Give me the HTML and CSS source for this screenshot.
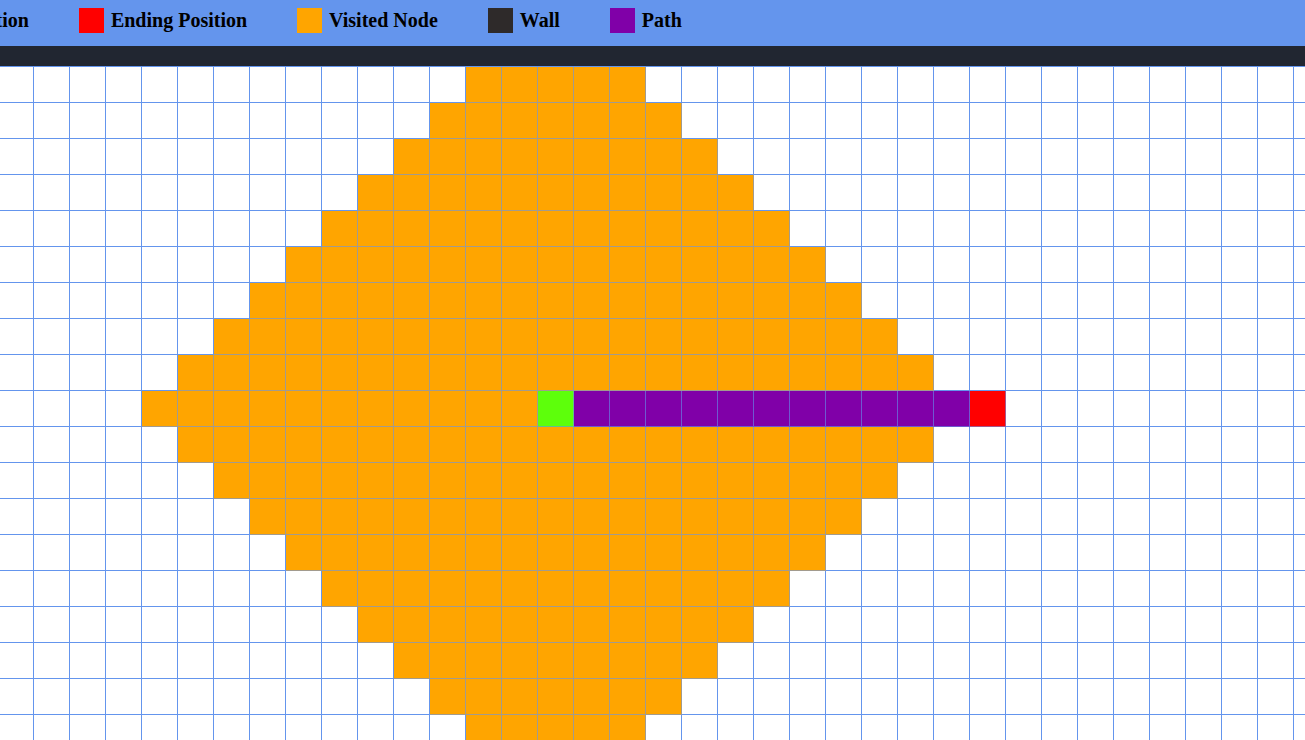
FILE: index.html
```html
<!DOCTYPE html>
<html lang="en">
<head>
<meta charset="utf-8">
<title>Pathfinding Visualizer</title>
<link rel="stylesheet" href="styles.css">
</head>
<body>
<header class="legend-bar">
  <ul class="legend">
    <li class="legend-item"><span class="swatch swatch-start"></span>Starting Position</li>
    <li class="legend-item"><span class="swatch swatch-end"></span>Ending Position</li>
    <li class="legend-item"><span class="swatch swatch-visited"></span>Visited Node</li>
    <li class="legend-item"><span class="swatch swatch-wall"></span>Wall</li>
    <li class="legend-item"><span class="swatch swatch-path"></span>Path</li>
  </ul>
</header>
<div class="toolbar"></div>
<main class="board">
  <div class="grid" id="grid"></div>
</main>
<script src="script.js"></script>
</body>
</html>
```

FILE: styles.css
```css
html, body {
  margin: 0;
  padding: 0;
  background: #ffffff;
  overflow: hidden;
}

body {
  width: 1305px;
  height: 740px;
  font-family: "Liberation Serif", "Times New Roman", serif;
}

.legend-bar {
  height: 46px;
  background: #6495ed;
  box-sizing: border-box;
  padding-top: 8px;
  overflow: hidden;
}

.legend {
  list-style: none;
  margin: 0 0 0 -147px;
  padding: 0;
  display: flex;
  align-items: center;
  gap: 50px;
  white-space: nowrap;
  height: 25px;
}

.legend-item {
  display: flex;
  align-items: center;
  gap: 7px;
  font-size: 20px;
  font-weight: bold;
  color: #000;
  line-height: 25px;
}

.swatch {
  width: 25px;
  height: 25px;
  flex: none;
  display: block;
}

.swatch-start { background: #5dff0b; }
.swatch-end { background: #ff0000; }
.swatch-visited { background: #ffa500; }
.swatch-wall { background: #2e2a2a; }
.swatch-path { background: #8000a8; }

.toolbar {
  height: 20px;
  background: #212631;
}

.board {
  overflow: hidden;
}

.grid {
  display: grid;
  grid-template-columns: repeat(37, 36px);
  grid-auto-rows: 36px;
  width: max-content;
  margin-left: -3px;
  border-top: 1px solid #6495ed;
  border-left: 1px solid #6495ed;
}

.cell {
  box-sizing: border-box;
  width: 36px;
  height: 36px;
  background: #ffffff;
  border-right: 1px solid #6495ed;
  border-bottom: 1px solid #6495ed;
}

.cell-visited {
  background: #ffa500;
  border-color: rgba(100, 149, 237, 0.6);
}

.cell-start {
  background: #5dff0b;
  border-color: rgba(100, 149, 237, 0.6);
}

.cell-end {
  background: #ff0000;
  border-color: rgba(100, 149, 237, 0.6);
}

.cell-path {
  background: #8000a8;
  border-color: rgba(100, 149, 237, 0.6);
}

.cell-wall {
  background: #2e2a2a;
}
```

FILE: script.js
```js
(function () {
  var grid = document.getElementById('grid');
  var COLS = 37, ROWS = 19;
  var START = { r: 9, c: 15 };
  var END = { r: 9, c: 27 };
  var RADIUS = 11;
  var frag = document.createDocumentFragment();
  for (var r = 0; r < ROWS; r++) {
    for (var c = 0; c < COLS; c++) {
      var cell = document.createElement('div');
      var cls = 'cell';
      var dist = Math.abs(r - START.r) + Math.abs(c - START.c);
      if (r === START.r && c === START.c) {
        cls += ' cell-start';
      } else if (r === END.r && c === END.c) {
        cls += ' cell-end';
      } else if (r === START.r && c > START.c && c < END.c) {
        cls += ' cell-path';
      } else if (dist <= RADIUS) {
        cls += ' cell-visited';
      }
      cell.className = cls;
      frag.appendChild(cell);
    }
  }
  grid.appendChild(frag);
})();
```
